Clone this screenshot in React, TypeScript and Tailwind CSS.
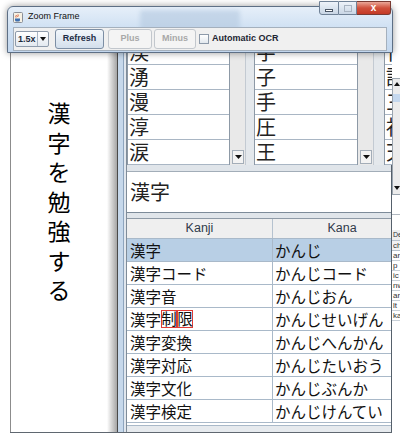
import React from "react";

const ui = "font-['Liberation_Sans',Arial,sans-serif]";
const jp = "font-['Noto_Sans_CJK_JP',sans-serif]";

const list1 = ["渓", "湧", "漫", "淳", "涙"];
const list2 = ["字", "子", "手", "圧", "王"];
const list3 = ["化", "記", "三", "社", "天"];

const rows: [string, string][] = [
  ["漢字", "かんじ"],
  ["漢字コード", "かんじコード"],
  ["漢字音", "かんじおん"],
  ["漢字制限", "かんじせいげん"],
  ["漢字変換", "かんじへんかん"],
  ["漢字対応", "かんじたいおう"],
  ["漢字文化", "かんじぶんか"],
  ["漢字検定", "かんじけんてい"],
];

const behind = ["ar", "p", "ic", "nw", "ar", "lt", "ka"];

function ListBox({ items, width }: { items: string[]; width: string }) {
  return (
    <div className={`${width} h-full shrink-0 overflow-hidden border-l border-[#8d99a6] bg-white`}>
      <div className="-mt-[13px]">
        {items.map((ch) => (
          <div key={ch} className={`${jp} h-[25px] border-b border-[#a9b6c4] pl-[1px] text-[20px] leading-[24px] text-[#222]`}>
            {ch}
          </div>
        ))}
      </div>
    </div>
  );
}

function ScrollBar() {
  return (
    <div className="flex h-full w-[17px] shrink-0 flex-col justify-end border-l border-r border-l-[#8d99a6] border-r-[#c3cad2] bg-[#e9e9e9]">
      <div className="mb-[1px] ml-[2px] mr-[1px] flex h-[14px] items-center justify-center border border-[#a3adb8] bg-[#f3f3f3]">
        <svg width="7" height="4" viewBox="0 0 7 4">
          <path d="M0 0h7L3.5 4z" fill="#111" />
        </svg>
      </div>
    </div>
  );
}

function Arrow({ up }: { up?: boolean }) {
  return (
    <svg width="6" height="4" viewBox="0 0 6 4">
      <path d={up ? "M0 4h6L3 0z" : "M0 0h6L3 4z"} fill="#111" />
    </svg>
  );
}

export default function App() {
  return (
    <div className={`${ui} relative h-[441px] w-[400px] overflow-hidden bg-white`}>
      {/* Zoom Frame window */}
      <div className="relative ml-[7px] mt-[6px] h-[47px] w-[386px] rounded-t-[6px] border border-[#5d6f85] bg-[linear-gradient(to_bottom,#e6eff9,#d0e1f3_45%,#c3d7ee)] shadow-[0_0_7px_rgba(0,0,0,0.4)]">
        <div className="absolute left-[132px] top-[3px] h-[22px] w-[100px] rounded-[3px] bg-[#b4c9e0] opacity-60 blur-[2px]" />
        <div className="relative flex h-[20px] items-center pl-[5px]">
          <svg width="10" height="11" viewBox="0 0 10 11">
            <rect x="0.5" y="0.5" width="9" height="10" rx="1" fill="#f6f1e4" stroke="#8a8f99" />
            <path d="M3 3c1 1-1 1.5 0 2.5M5 2.5c1 1-1 1.5 0 2.5" stroke="#d2502a" fill="none" />
            <path d="M2 6.5h5v1.5a1.5 1.5 0 0 1-1.5 1.5h-2A1.5 1.5 0 0 1 2 8z" fill="#3d6fb0" />
          </svg>
          <span className="ml-[5px] text-[9px] text-[#111]">Zoom Frame</span>
          <div className="-mt-[6px] ml-auto mr-[1px] flex self-start">
            <div className="flex h-[14px] w-[20px] items-center justify-center rounded-bl-[3px] border border-[#6f8196] bg-[linear-gradient(to_bottom,#eef3f9,#c9d6e5)]">
              <div className="mt-[4px] h-[3px] w-[8px] border border-[#4a5564] bg-white" />
            </div>
            <div className="flex h-[14px] w-[18px] items-center justify-center border-y border-r border-[#6f8196] bg-[linear-gradient(to_bottom,#eef3f9,#c9d6e5)]">
              <div className="h-[7px] w-[8px] border border-[#a9b4c2]" />
            </div>
            <div className="flex h-[14px] w-[34px] items-center justify-center rounded-br-[3px] border-y border-r border-[#7a3a32] bg-[linear-gradient(to_bottom,#eba898,#d0513c_50%,#c43a26)]">
              <span className="text-[10px] font-bold leading-none text-white">x</span>
            </div>
          </div>
        </div>
        <div className="relative mx-[5px] flex h-[24px] items-center border border-[#a4b0bd] bg-[#f0f0f0]">
          <div className="ml-[1px] flex h-[16px] w-[34px] items-stretch rounded-[2px] border border-[#8e9bab] bg-[linear-gradient(to_bottom,#ffffff,#e3e9f0)]">
            <span className="flex-1 pl-[2px] text-[9px] font-bold leading-[14px] text-[#1d2a3c]">1.5x</span>
            <div className="flex w-[11px] items-center justify-center border-l border-[#a9b5c3]">
              <Arrow />
            </div>
          </div>
          <div className="ml-[6px] flex h-[20px] w-[49px] items-center justify-center rounded-[3px] border border-[#7c8ea4] bg-[linear-gradient(to_bottom,#f3f7fb,#d3dfec)] text-[9px] font-bold text-[#1e2d45]">
            Refresh
          </div>
          <div className="ml-[4px] flex h-[20px] w-[44px] items-center justify-center rounded-[3px] border border-[#c2c7cd] bg-[#f4f4f4] text-[9px] font-bold text-[#a8a8a8]">
            Plus
          </div>
          <div className="ml-[2px] flex h-[20px] w-[42px] items-center justify-center rounded-[3px] border border-[#c2c7cd] bg-[#f4f4f4] text-[9px] font-bold text-[#a8a8a8]">
            Minus
          </div>
          <div className="ml-[3px] h-[10px] w-[10px] border border-[#8d9aaa] bg-[linear-gradient(to_bottom,#ffffff,#e2e8ee)]" />
          <span className="ml-[3px] text-[9px] font-bold text-[#1d2533]">Automatic OCR</span>
        </div>
      </div>

      {/* zoomed content */}
      <div className="flex h-[380px]">
        <div className="w-[10px] shrink-0 bg-white" />
        <div className="flex w-[382px] shrink-0 border-b border-[#5f6770]">
          {/* left panel */}
          <div className="flex w-[108px] shrink-0 border-l border-[#8c8c8c] bg-white">
            <div className={`${jp} flex flex-1 flex-col items-center pt-[45px] text-[23px] leading-[29.5px] text-black`}>
              {"漢字を勉強する".split("").map((ch, i) => (
                <span key={i}>{ch}</span>
              ))}
            </div>
            <div className="w-[10px] bg-gradient-to-r from-white to-[#a6a6a6]" />
            <div className="w-[1px] bg-[#4a4a4a]" />
          </div>
          {/* divider */}
          <div className="flex w-[9px] shrink-0">
            <div className="w-[5px] bg-[#c6d8eb]" />
            <div className="w-[1px] bg-[#8ea5be]" />
            <div className="w-[2px] bg-[#e1e7ee]" />
            <div className="w-[1px] bg-[#7f8c99]" />
          </div>
          {/* right main */}
          <div className="flex w-[265px] shrink-0 flex-col border-r border-[#55606b]">
            <div className="flex h-[112px] bg-[#e4e8ec]">
              <ListBox items={list1} width="w-[102px]" />
              <ScrollBar />
              <div className="w-[8px] shrink-0" />
              <ListBox items={list2} width="w-[103px]" />
              <ScrollBar />
              <div className="w-[10px] shrink-0" />
              <ListBox items={list3} width="w-[20px]" />
            </div>
            <div className="h-[7px] border-b border-[#a2adb8] bg-[#e0e5ea]" />
            <div className={`${jp} flex h-[41px] items-center border-b border-[#7d8b99] bg-white pl-[3px] text-[20px] text-[#222]`}>
              漢字
            </div>
            <div className="h-[5px] bg-[#e0e5ea]" />
            <div className="flex h-[214px] flex-col overflow-hidden border-t border-[#8e9aa6] bg-white">
              <div className="flex h-[20px] shrink-0 border-b border-[#a9b9c9] bg-[#efefef] text-[12.5px] text-[#2f3a4a]">
                <div className="flex w-[146px] shrink-0 items-center justify-center border-r border-[#b5c2cf]">Kanji</div>
                <div className="flex w-[138px] shrink-0 items-center justify-center">Kana</div>
              </div>
              {rows.map(([k, kana], i) => (
                <div
                  key={k}
                  className={`${jp} flex h-[23px] shrink-0 border-b border-[#a9b9c9] text-[15.5px] leading-[22px] text-[#111] ${i === 0 ? "bg-[#b8cfe5]" : "bg-white"}`}
                >
                  <div className="flex w-[146px] shrink-0 items-center whitespace-nowrap border-r border-[#a9b9c9] pl-[3px]">
                    {k === "漢字制限" ? (
                      <>
                        <span>漢字</span>
                        <span className="flex h-[18px] w-[16px] items-center justify-center leading-none shadow-[inset_0_0_0_1px_#e03c36]">制</span>
                        <span className="flex h-[18px] w-[16px] items-center justify-center leading-none shadow-[inset_0_0_0_1px_#e03c36]">限</span>
                      </>
                    ) : (
                      k
                    )}
                  </div>
                  <div className="w-[140px] shrink-0 whitespace-nowrap pl-[2px]">{kana}</div>
                </div>
              ))}
              <div className="mt-[2px] h-[1px] bg-[#a9b9c9]" />
              <div className="flex-1 bg-[#e6eaee]" />
            </div>
          </div>
        </div>
        {/* window behind, right edge */}
        <div className="flex w-[8px] shrink-0 flex-col overflow-hidden bg-white text-[8px] leading-[10px] text-[#333]">
          <div className="h-[25px]" />
          <div className="flex h-[117px] flex-col items-center border-y border-l border-[#9aa4ae] bg-[#ececec] pt-[3px]">
            <Arrow up />
            <div className="mt-[8px] h-[8px] w-full bg-[#c5d8ee]" />
            <div className="flex-1" />
            <div className="mb-[4px]">
              <Arrow />
            </div>
          </div>
          <div className="h-[20px] border-b border-[#b0b8c0]" />
          <div className="h-[15px]" />
          <div className="h-[10px] whitespace-nowrap bg-[#eeeeee] pl-[1px] text-[7px]">De</div>
          <div className="h-[11px] whitespace-nowrap border-y border-[#b7c2cd] bg-[#f1f1f1] pl-[1px]">ch</div>
          {behind.map((t, i) => (
            <div key={i} className="h-[10px] whitespace-nowrap border-b border-[#c9d1d9] pl-[1px]">
              {t}
            </div>
          ))}
        </div>
      </div>
    </div>
  );
}
